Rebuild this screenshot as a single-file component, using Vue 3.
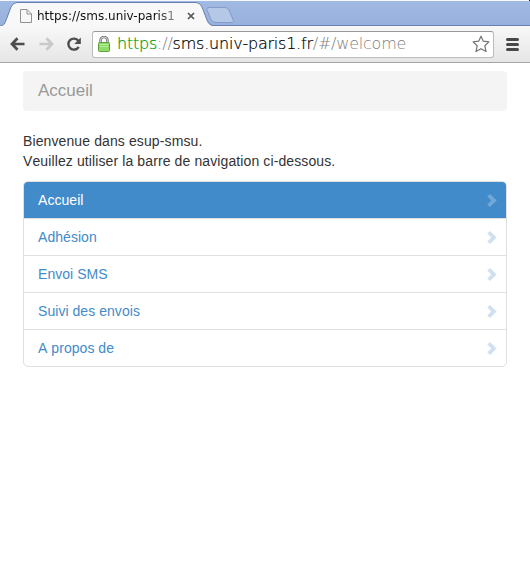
<script setup>
import { ref } from 'vue'

const current = ref('Accueil')
const items = ['Accueil', 'Adhésion', 'Envoi SMS', 'Suivi des envois', 'A propos de']
</script>

<template>
  <div class="window">
    <header class="tabstrip">
      <svg class="tabshape" width="530" height="27" viewBox="0 0 530 27">
        <path d="M207 10 Q206 7.500 209 7.500 H225 Q228 7.500 229 10 L233 19.500 Q234.500 22.500 231 22.500 H216 Q212.500 22.500 211 19.500 Z" fill="#b6c8e8" stroke="#829bc7" />
        <path d="M0 26.500 C4 26 5 23 6.500 19 L11 7 Q13 2.500 17 2.500 H196 Q200 2.500 202 7 L207 20 Q209 26 214 26.500 Z" fill="#f8f8f8" />
        <path d="M0 26 C4 26 5 23 6.500 19 L11 7 Q13 2.500 17 2.500 H196 Q200 2.500 202 7 L207 20 Q209 25.500 214 25.500 H530" fill="none" stroke="#6980ae" />
        <rect x="529" width="1" height="1" fill="#111" />
      </svg>
      <div class="tab">
        <svg class="page" width="12" height="14" viewBox="0 0 12 14">
          <path d="M.5.500H7L11.500 5V13.500H.5Z" fill="#f7f7f7" stroke="#929292" />
          <path d="M7 .5V5H11.500" fill="none" stroke="#929292" />
        </svg>
        <span class="title">https://sms.univ-paris1</span>
        <svg class="close" width="8" height="8" viewBox="0 0 8 8">
          <path d="M1 1L7 7M7 1L1 7" stroke="#555" stroke-width="1.700" />
        </svg>
      </div>
    </header>
    <div class="toolbar">
      <svg class="back" width="15" height="14" viewBox="0 0 15 14">
        <path d="M7.500 1.300L2 7L7.500 12.700M2.500 7H14.500" fill="none" stroke="#4d4d4d" stroke-width="2.700" />
      </svg>
      <svg class="forward" width="15" height="14" viewBox="0 0 15 14">
        <path d="M7.500 1.300L13 7L7.500 12.700M12.500 7H.5" fill="none" stroke="#c9c9c9" stroke-width="2.700" />
      </svg>
      <svg class="reload" width="16" height="15" viewBox="0 0 16 15">
        <path d="M12.300 3.800A5.500 5.500 0 1 0 12.700 9.800" fill="none" stroke="#4d4d4d" stroke-width="2.400" />
        <path d="M14.800 .5V7H8.300Z" fill="#4d4d4d" />
      </svg>
      <div class="address">
        <svg class="lock" width="12" height="16" viewBox="0 0 12 16">
          <path d="M2.500 8V4.500A3.500 3.500 0 0 1 9.500 4.500V8" fill="none" stroke="#777" stroke-width="2.600" />
          <path d="M2.500 8V4.500A3.500 3.500 0 0 1 9.500 4.500V8" fill="none" stroke="#d5d5d5" />
          <rect x=".5" y="6.500" width="11" height="9" rx="1" fill="#8edc65" stroke="#609c45" />
          <path d="M2 8.500H10M2 10.500H10" stroke="#b6ed98" />
        </svg>
        <span class="url"><span class="scheme">https</span><span class="dim">://</span><span>sms.univ-paris1.fr</span><span class="dim">/#/welcome</span></span>
        <svg class="star" width="18" height="18" viewBox="0 0 18 18">
          <path d="M9 1.200L11.300 6.200L16.900 6.900L12.800 10.700L14 16.600L9 13.700L4 16.600L5.200 10.700L1.100 6.900L6.700 6.200Z" fill="#fff" stroke="#747474" stroke-width="1.200" stroke-linejoin="round" />
        </svg>
      </div>
      <svg class="menu" width="13" height="13" viewBox="0 0 13 13">
        <path d="M1.500 1.500H11.500M1.500 6.500H11.500M1.500 11.500H11.500" stroke="#484848" stroke-width="3" stroke-linecap="round" />
      </svg>
    </div>
    <main>
      <div class="crumb">Accueil</div>
      <p>Bienvenue dans esup-smsu.<br />Veuillez utiliser la barre de navigation ci-dessous.</p>
      <nav>
        <a v-for="item in items" :key="item" :class="{ active: item === current }" @click="current = item">
          <span>{{ item }}</span>
          <svg width="10" height="14" viewBox="0 0 10 14">
            <path d="M3 .9L9.700 7.500L3 14L.3 11.400L4.300 7.500L.3 3.600Z" fill="currentColor" />
          </svg>
        </a>
      </nav>
    </main>
  </div>
</template>

<style>
body {
  background: #fff;
}
</style>

<style scoped>
.window {
  height: 571px;
  overflow: hidden;
  font-family: "Liberation Sans", Arial, sans-serif;
}
.tabstrip {
  position: relative;
  height: 26px;
  box-sizing: border-box;
  border-top: 1px solid #f4f7fb;
  background: linear-gradient(#a0bae3, #98b0dd);
}
.tabshape {
  position: absolute;
  left: 0;
  top: -1px;
}
.tab {
  position: relative;
  display: flex;
  align-items: center;
  height: 29px;
  padding-left: 20px;
}
.title {
  width: 141px;
  margin-left: 5px;
  overflow: hidden;
  font: 12px/16px "DejaVu Sans", sans-serif;
  white-space: nowrap;
  color: transparent;
  background: linear-gradient(90deg, #111 120px, #aaa 141px);
  background-clip: text;
}
.close {
  margin-left: 9px;
}
.toolbar {
  position: relative;
  display: flex;
  align-items: center;
  box-sizing: border-box;
  height: 37px;
  padding: 0 11px 0 10px;
  border-bottom: 1px solid #a4a4a4;
  background: linear-gradient(#f8f8f8, #e6e6e6);
}
.forward {
  margin-left: 14px;
}
.reload {
  margin-left: 12px;
}
.address {
  display: flex;
  align-items: center;
  box-sizing: border-box;
  width: 402px;
  height: 27px;
  margin-left: 10px;
  padding: 0 3px 0 5px;
  border: 1px solid #bbb;
  border-top-color: #999;
  border-radius: 3px;
  background: #fff;
}
.url {
  flex: 1;
  margin-left: 7px;
  font: 200 16px/22px "DejaVu Sans Light", "DejaVu Sans", sans-serif;
  letter-spacing: -0.22px;
  white-space: nowrap;
  color: #000;
  -webkit-text-stroke: 0.2px currentColor;
}
.scheme {
  color: #090;
}
.dim {
  color: #808080;
  -webkit-text-stroke: 0;
}
.menu {
  margin-left: 12px;
}
main {
  padding: 8px 23px 0;
}
.crumb {
  height: 40px;
  padding-left: 15px;
  border-radius: 4px;
  background: #f4f4f4;
  color: #999;
  font-size: 17px;
  line-height: 39px;
}
p {
  margin: 20px 0 10px;
  color: #333;
  font-size: 14px;
  line-height: 20px;
  letter-spacing: 0.11px;
  font-kerning: none;
}
nav {
  border: 1px solid #e0e0e0;
  border-radius: 5px;
  overflow: hidden;
  font-size: 14px;
  letter-spacing: 0.05px;
  font-kerning: none;
}
a {
  display: flex;
  align-items: center;
  justify-content: space-between;
  height: 36px;
  padding: 0 9px 0 14px;
  color: #428bca;
}
a + a {
  border-top: 1px solid #e0e0e0;
}
a svg {
  opacity: .25;
}
.active {
  background: #428bca;
  color: #fff;
}
</style>
